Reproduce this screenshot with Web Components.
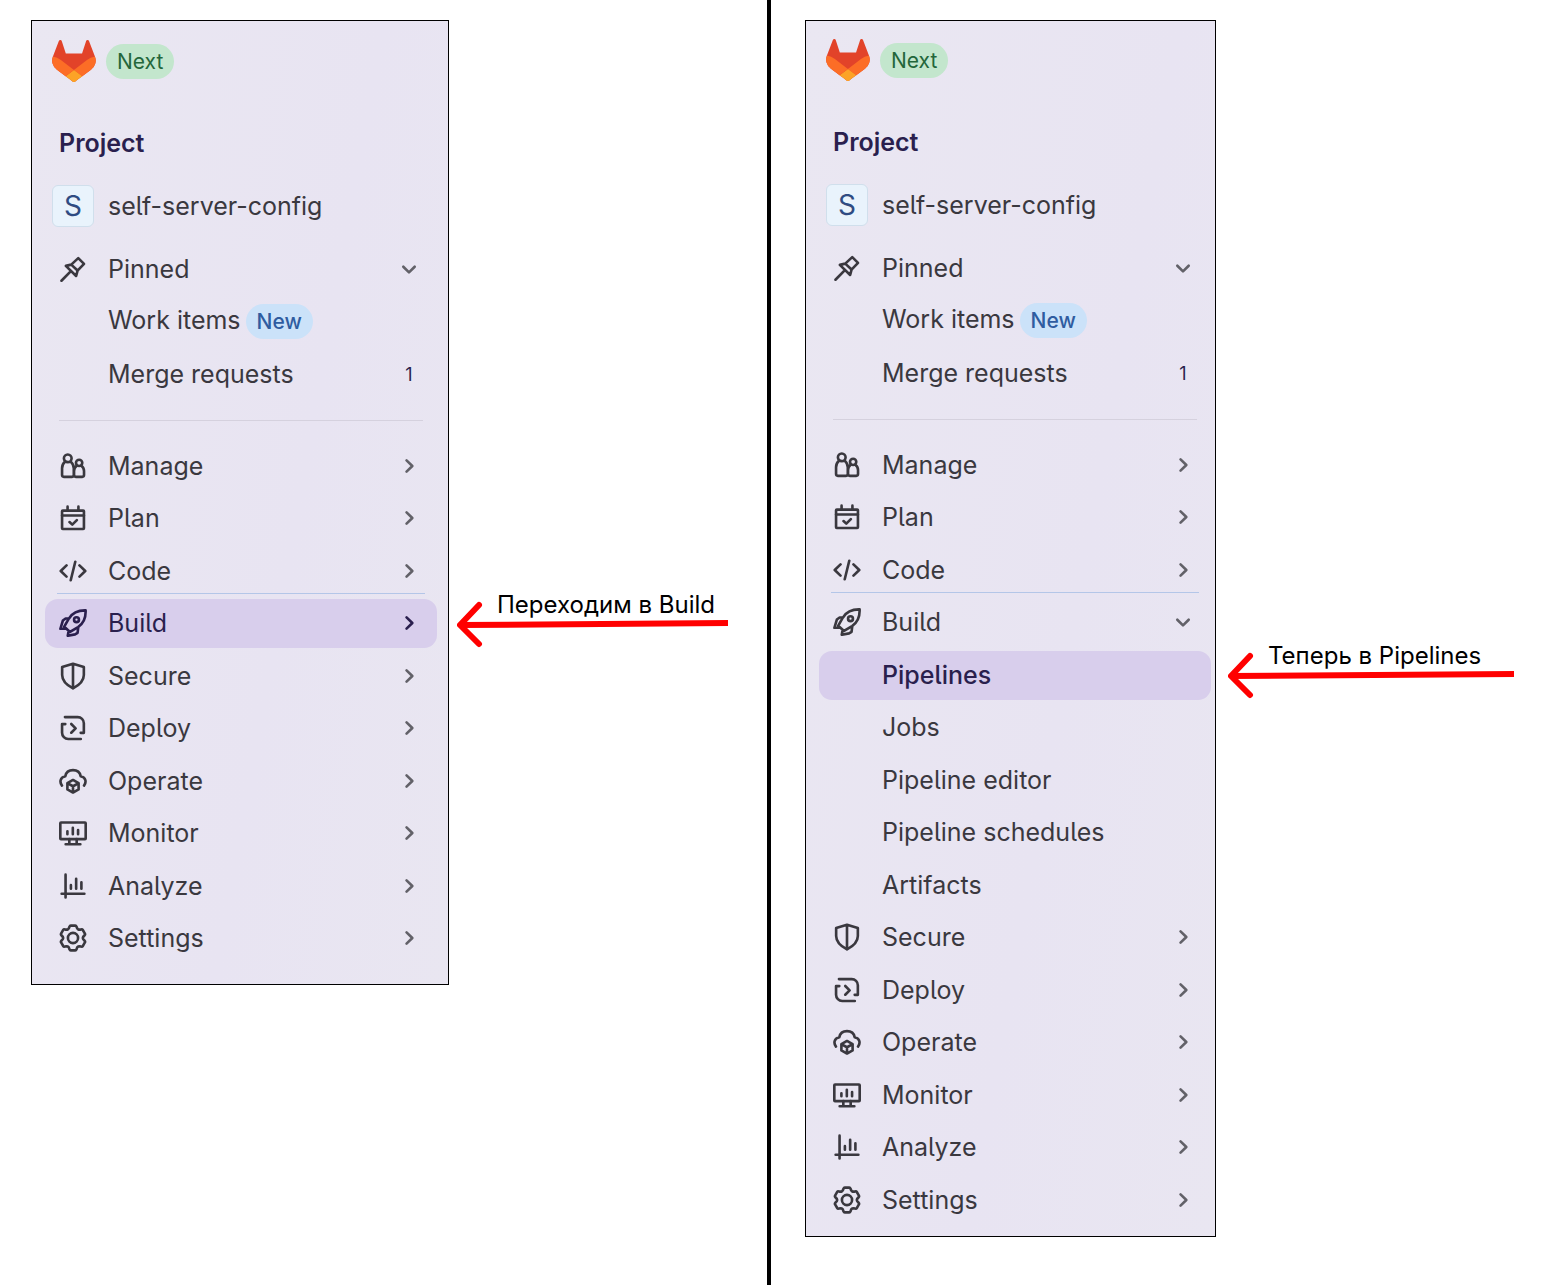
<!DOCTYPE html>
<html lang="ru">
<head>
<meta charset="utf-8">
<title>Build / Pipelines</title>
<style>
  body {
    margin: 0;
    background: #fff;
    font-family: Inter, "Liberation Sans", sans-serif;
  }
</style>
</head>
<body>
<guide-page>
  <guide-step slot="first" style="--left: 31px; --right: 39px; --gap: 8px; --columns: 418fr 271fr">
    <side-bar slot="screen" style="--top: 19px; --bottom: 21px; --side: 11px">
      <nav-group label="Pinned" slot="pinned">
        <nav-item icon="pin" label="Pinned" arrow="down"></nav-item>
        <nav-item label="Work items" badge="New"></nav-item>
        <nav-item label="Merge requests" count="1"></nav-item>
      </nav-group>
      <nav-group label="Sections">
        <nav-item icon="manage" label="Manage" arrow="right"></nav-item>
        <nav-item icon="plan" label="Plan" arrow="right"></nav-item>
        <nav-item icon="code" label="Code" arrow="right" edge></nav-item>
        <nav-item icon="build" label="Build" arrow="right" active></nav-item>
        <nav-item icon="secure" label="Secure" arrow="right"></nav-item>
        <nav-item icon="deploy" label="Deploy" arrow="right"></nav-item>
        <nav-item icon="operate" label="Operate" arrow="right"></nav-item>
        <nav-item icon="monitor" label="Monitor" arrow="right"></nav-item>
        <nav-item icon="analyze" label="Analyze" arrow="right"></nav-item>
        <nav-item icon="settings" label="Settings" arrow="right"></nav-item>
      </nav-group>
    </side-bar>
    <step-note slot="note" style="--offset: 570px">Переходим в Build</step-note>
  </guide-step>
  <guide-step slot="second" style="--left: 34px; --right: 42px; --gap: 12px; --columns: 411fr 286fr">
    <side-bar slot="screen" style="--top: 18px; --bottom: 11px; --side: 4px">
      <nav-group label="Pinned" slot="pinned">
        <nav-item icon="pin" label="Pinned" arrow="down"></nav-item>
        <nav-item label="Work items" badge="New"></nav-item>
        <nav-item label="Merge requests" count="1"></nav-item>
      </nav-group>
      <nav-group label="Sections">
        <nav-item icon="manage" label="Manage" arrow="right"></nav-item>
        <nav-item icon="plan" label="Plan" arrow="right"></nav-item>
        <nav-item icon="code" label="Code" arrow="right" edge></nav-item>
        <nav-item icon="build" label="Build" arrow="down"></nav-item>
        <nav-item label="Pipelines" active></nav-item>
        <nav-item label="Jobs"></nav-item>
        <nav-item label="Pipeline editor"></nav-item>
        <nav-item label="Pipeline schedules"></nav-item>
        <nav-item label="Artifacts"></nav-item>
        <nav-item icon="secure" label="Secure" arrow="right"></nav-item>
        <nav-item icon="deploy" label="Deploy" arrow="right"></nav-item>
        <nav-item icon="operate" label="Operate" arrow="right"></nav-item>
        <nav-item icon="monitor" label="Monitor" arrow="right"></nav-item>
        <nav-item icon="analyze" label="Analyze" arrow="right"></nav-item>
        <nav-item icon="settings" label="Settings" arrow="right"></nav-item>
      </nav-group>
    </side-bar>
    <step-note slot="note" style="--offset: 621px">Теперь в Pipelines</step-note>
  </guide-step>
</guide-page>

<script>
const icons = {
  pin: `<path d="M1.4 14.7 6.8 9.2M11 1.8l3.3 3.3-3.7 3.8-.8 3.1-5.9-5.8 3.1-.7zM7 5.5l3.6 3.4"/>`,
  manage: `<circle cx="5" cy="3.6" r="2.2"/><circle cx="11.5" cy="6.2" r="1.8"/><path d="M3.4 5.6C2.3 6.6 1.75 7.8 1.75 9.3v3.9c0 .6.4 1 1 1h4.7c.6 0 1-.4 1-1V9.3c0-1.5-.6-2.7-1.7-3.7M10.1 7.8c-1 .8-1.5 1.8-1.5 3v2.4c0 .6.4 1 1 1h3.7c.6 0 1-.4 1-1v-2.4c0-1.2-.5-2.2-1.5-3"/>`,
  plan: `<rect x="1.75" y="3.75" width="12.5" height="10.5" rx=".4"/><path d="M4.9 1.5v2.2M11.1 1.5v2.2M1.75 6.6h12.5M6 10.3l1.6 1.5 2.6-2.6"/>`,
  code: `<path d="M4.3 4.8 1 8l3.3 3.2M11.7 4.8 15 8l-3.3 3.2M9.3 2.7 6.7 13.3"/>`,
  build: `<path d="M15.2.8C10.9.7 7.7 2.2 5.7 5.4L3 10.1l3.3 3 4.6-2.8c3.1-2 4.5-5.2 4.3-9.5zM5.6 5.4H3.8L2.2 6.6.8 11.3h2.4M11 10.5l-.4 3.1-1.4.9-4.2.8.5-2.8"/><circle cx="10" cy="6.1" r="1.4"/>`,
  secure: `<path d="M8 1 14.2 2.9v4.5c0 3.4-2.3 5.6-6.2 7.7-3.9-2.1-6.2-4.3-6.2-7.7V2.9zM8 1v14"/>`,
  deploy: `<path d="M3.4 1.75h7.3a3.5 3.5 0 0 1 3.5 3.5v5.5h-1.8M3.6 5.75H1.75v5a3.5 3.5 0 0 0 3.5 3.5h7.2M7 5.7 9.5 8.2 7 10.7"/>`,
  operate: `<path d="M1.7 10.6C.4 9 .3 6 3.6 5.3 4 3.2 5.7 1.8 8 1.8s4 1.4 4.4 3.5c3.3.7 3.2 3.7 1.9 5.3"/><path d="m8 7.4 3.2 1.8v3.6L8 14.6l-3.2-1.8V9.2zM5 9.3 8 11l3-1.7M8 11v3.4"/>`,
  monitor: `<rect x=".75" y="2" width="14.5" height="9.5" rx=".4"/><path d="M5.9 11.5v2.8M10.1 11.5v2.8M3.8 14.4h8.4M4.8 7v1.7M7.9 5v3.7M10.9 6.3v2.4"/>`,
  analyze: `<path d="M3.75 1.5v13M1.5 12.4h13M6.8 7.5v2M9.8 3.9v5.6M12.8 5.9v3.6"/>`,
  settings: `<circle cx="8" cy="8" r="2.9"/><path d="M6.7.9h2.6q.5 0 .7.6.3 1.3 1 1.6.7.3 1.6 0 .7-.2 1 .3l1.2 2.1q.3.5-.2 1-1 .8-1 1.5t1 1.5q.5.5.2 1l-1.2 2.1q-.3.5-1 .3-.9-.3-1.6 0-.7.3-1 1.6-.2.6-.7.6H6.7q-.5 0-.7-.6-.3-1.3-1-1.6-.7-.3-1.6 0-.7.2-1-.3L1.2 10.5q-.3-.5.2-1 1-.8 1-1.5t-1-1.5q-.5-.5-.2-1l1.2-2.1q.3-.5 1-.3.9.3 1.6 0 .7-.3 1-1.6.2-.6.7-.6z"/>`,
  right: `<path d="M6.6 4.75 9.9 8l-3.3 3.25"/>`,
  down: `<path d="M4.75 6.7 8 9.9l3.25-3.2"/>`,
};

function svgIcon(name, className = "icon") {
  return `<svg class="${className}" viewBox="0 0 16 16" aria-hidden="true">${icons[name] || ""}</svg>`;
}

class GuidePage extends HTMLElement {
  constructor() {
    super();
    this.attachShadow({ mode: "open" });
  }

  connectedCallback() {
    this.shadowRoot.innerHTML = `
      <style>
        :host {
          display: grid;
          grid-template-columns: 767fr 4px 785fr;
          min-height: 100vh;
        }
        .divider {
          background: #000;
        }
      </style>
      <slot name="first"></slot>
      <div class="divider"></div>
      <slot name="second"></slot>
    `;
  }
}

class GuideStep extends HTMLElement {
  constructor() {
    super();
    this.attachShadow({ mode: "open" });
  }

  connectedCallback() {
    this.shadowRoot.innerHTML = `
      <style>
        :host {
          display: grid;
          grid-template-columns: var(--columns);
          column-gap: var(--gap);
          align-items: start;
          padding: 20px var(--right) 20px var(--left);
        }
      </style>
      <slot name="screen"></slot>
      <slot name="note"></slot>
    `;
  }
}

class SideBar extends HTMLElement {
  constructor() {
    super();
    this.attachShadow({ mode: "open" });
  }

  connectedCallback() {
    this.shadowRoot.innerHTML = `
      <style>
        :host {
          display: block;
          border: 1px solid #000;
          padding: var(--top) var(--side) var(--bottom) 13px;
          background: linear-gradient(100deg, #eae7f2, #e8e4f2 60%, #e9e6f1);
          color: #3a383f;
        }
        header {
          display: flex;
          align-items: center;
          gap: 10px;
          padding-left: 7px;
        }
        .logo {
          display: flex;
        }
        .logo svg {
          width: 44px;
          height: 42px;
        }
        .next {
          padding: 0 11px;
          border-radius: 18px;
          background: #c3e6cd;
          color: #24663b;
          font-size: 21px;
          line-height: 35px;
          text-decoration: none;
        }
        h2 {
          margin: 45px 14px 23px;
          font-size: 25px;
          line-height: 32px;
          font-weight: 600;
          color: #2a1f4e;
        }
        .project {
          box-sizing: border-box;
          display: flex;
          align-items: center;
          gap: 14px;
          height: 49px;
          padding: 0 0 1px 7px;
          margin-bottom: 14px;
          color: inherit;
          font-size: 25px;
          text-decoration: none;
          font-feature-settings: "cv05";
        }
        .avatar {
          box-sizing: border-box;
          width: 42px;
          border: 1px solid #d0dfec;
          border-radius: 6px;
          background: #e9f3fc;
          color: #2f4b82;
          font-size: 28px;
          line-height: 40px;
          text-align: center;
        }
        hr {
          margin: 21px 14px;
          border: 0;
          border-top: 1px solid #d5d1de;
        }
      </style>
      <header>
        <a class="logo" href="#" aria-label="GitLab">
          <svg viewBox="0 0 25 24" aria-hidden="true">
            <path fill="#E24329" d="m24.507 9.5-.034-.09L21.082.562a.896.896 0 0 0-1.694.091l-2.29 7.01H7.825L5.535.653a.898.898 0 0 0-1.694-.09L.451 9.411.416 9.5a6.297 6.297 0 0 0 2.09 7.278l.012.01.03.022 5.16 3.867 2.56 1.935 1.554 1.176a1.051 1.051 0 0 0 1.268 0l1.555-1.176 2.56-1.935 5.197-3.89.014-.01A6.297 6.297 0 0 0 24.507 9.5Z"/>
            <path fill="#FC6D26" d="m24.507 9.5-.034-.09a11.44 11.44 0 0 0-4.56 2.051l-7.447 5.632 4.742 3.584 5.197-3.89.014-.01A6.297 6.297 0 0 0 24.507 9.5Z"/>
            <path fill="#FCA326" d="m7.707 20.677 2.56 1.935 1.555 1.176a1.051 1.051 0 0 0 1.268 0l1.555-1.176 2.56-1.935-4.743-3.584-4.755 3.584Z"/>
            <path fill="#FC6D26" d="M5.01 11.461a11.43 11.43 0 0 0-4.56-2.05L.416 9.5a6.297 6.297 0 0 0 2.09 7.278l.012.01.03.022 5.16 3.867 4.745-3.584-7.444-5.632Z"/>
          </svg>
        </a>
        <a class="next" href="#">Next</a>
      </header>
      <h2>Project</h2>
      <a class="project" href="#"><span class="avatar">S</span><span>self-server-config</span></a>
      <slot name="pinned"></slot>
      <hr>
      <slot></slot>
    `;
  }
}

class NavGroup extends HTMLElement {
  constructor() {
    super();
    this.attachShadow({ mode: "open" });
  }

  connectedCallback() {
    this.shadowRoot.innerHTML = `
      <style>
        :host {
          display: block;
        }
        nav {
          display: flex;
          flex-direction: column;
        }
        ::slotted(:nth-child(odd)) {
          margin-bottom: 3px;
        }
        ::slotted(:nth-child(even)) {
          margin-bottom: 4px;
        }
        ::slotted(:last-child) {
          margin-bottom: 0;
        }
      </style>
      <nav aria-label="${this.getAttribute("label")}"><slot></slot></nav>
    `;
  }
}

class NavItem extends HTMLElement {
  constructor() {
    super();
    this.attachShadow({ mode: "open" });
  }

  connectedCallback() {
    const label = this.getAttribute("label");
    const badge = this.getAttribute("badge");
    const count = this.getAttribute("count");
    const arrow = this.getAttribute("arrow");
    // sections fold open, everything else is a plain link
    const tag = arrow ? "button" : "a";
    const attrs = arrow ? `type="button" aria-expanded="${arrow === "down"}"` : `href="#"`;
    this.shadowRoot.innerHTML = `
      <style>
        :host {
          display: block;
          position: relative;
        }
        .row {
          box-sizing: border-box;
          display: flex;
          align-items: center;
          width: 100%;
          height: 49px;
          padding: 0 14px 1px;
          border: 0;
          border-radius: 13px;
          background: none;
          color: inherit;
          font: inherit;
          font-size: 25px;
          font-feature-settings: "cv05";
          text-align: left;
          text-decoration: none;
          cursor: pointer;
        }
        :host([active]) .row {
          background: #d8ceec;
          color: #2a1f4e;
        }
        :host([active]) a {
          font-weight: 500;
        }
        svg {
          flex: none;
          width: 28px;
          height: 28px;
          fill: none;
          stroke: currentColor;
          stroke-width: 1.5;
          stroke-linecap: round;
          stroke-linejoin: round;
        }
        .icon {
          margin-right: 21px;
        }
        .arrow {
          color: #626168;
        }
        :host([active]) .arrow {
          color: inherit;
        }
        .label {
          flex: 1;
          display: flex;
          align-items: baseline;
          gap: 5px;
          white-space: nowrap;
        }
        .badge {
          padding: 0 11px;
          border-radius: 18px;
          background: #cbe2f9;
          color: #2f5ca0;
          font-size: 21px;
          line-height: 35px;
          font-weight: 500;
        }
        .count {
          width: 28px;
          color: #2a1f4e;
          font-size: 18px;
          text-align: center;
        }
        /* scroll edge drawn over the bottom of the row */
        :host([edge])::after {
          content: "";
          position: absolute;
          right: 12px;
          bottom: 2px;
          left: 12px;
          height: 1px;
          background: #b4c6e8;
        }
      </style>
      <${tag} class="row" ${attrs}>
        ${svgIcon(this.getAttribute("icon"))}
        <span class="label">${label}${badge ? `<span class="badge">${badge}</span>` : ""}</span>
        ${count ? `<span class="count">${count}</span>` : ""}
        ${arrow ? svgIcon(arrow, "arrow") : ""}
      </${tag}>
    `;
  }
}

class StepNote extends HTMLElement {
  constructor() {
    super();
    this.attachShadow({ mode: "open" });
  }

  connectedCallback() {
    this.shadowRoot.innerHTML = `
      <style>
        :host {
          display: block;
          margin-top: var(--offset);
          color: #000;
        }
        p {
          margin: 0 0 0 40px;
          font-size: 24px;
          line-height: 30px;
          white-space: nowrap;
        }
        .pointer {
          display: grid;
          margin-top: -20px;
        }
        .pointer svg {
          grid-area: 1 / 1;
          width: 100%;
          height: 48px;
          fill: none;
          stroke: #f00;
          stroke-width: 6;
          stroke-linecap: round;
          stroke-linejoin: round;
        }
        .pointer .head {
          width: 30px;
        }
        .pointer .shaft {
          stroke-linecap: butt;
        }
      </style>
      <p><slot></slot></p>
      <div class="pointer">
        <svg class="shaft" viewBox="0 0 280 48" preserveAspectRatio="none" aria-hidden="true"><path d="M3 25 280 23"/></svg>
        <svg class="head" viewBox="0 0 30 48" aria-hidden="true"><path d="M22 5 3 25 22 44"/></svg>
      </div>
    `;
  }
}

customElements.define("guide-page", GuidePage);
customElements.define("guide-step", GuideStep);
customElements.define("side-bar", SideBar);
customElements.define("nav-group", NavGroup);
customElements.define("nav-item", NavItem);
customElements.define("step-note", StepNote);
</script>
</body>
</html>
